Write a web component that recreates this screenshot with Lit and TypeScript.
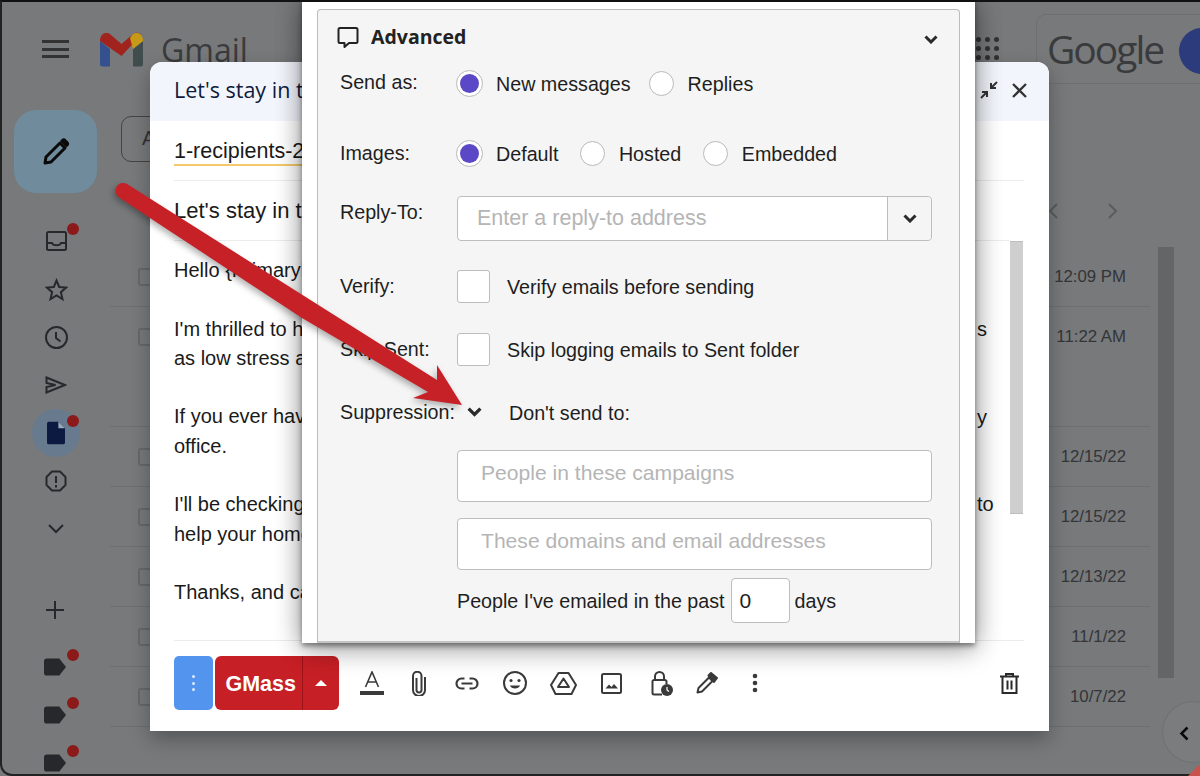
import { LitElement, html, css, svg } from 'lit';
import { customElement } from 'lit/decorators.js';

const ROWS = [
  { h: 60, date: '12:09 PM' },
  { h: 120, date: '11:22 AM' },
  { h: 60, date: '12/15/22' },
  { h: 60, date: '12/15/22' },
  { h: 60, date: '12/13/22' },
  { h: 60, date: '11/1/22' },
  { h: 60, date: '10/7/22' },
];

const icon = (w: number, h: number, body: unknown) => html`
  <svg width="${w}" height="${h}" viewBox="0 0 ${w} ${h}" fill="none" stroke="currentColor" stroke-width="2">${body}</svg>
`;

const chevron = (w = 14) => html`
  <svg width="${w}" height="${(w * 9) / 14}" viewBox="0 0 14 9" fill="none" stroke="#2a2a2a" stroke-width="3">
    <path d="M1.5 1.5 7 7l5.5-5.5" />
  </svg>
`;

const NAV = [
  { dot: true, w: 21, h: 20, body: svg`<rect x="1" y="1" width="19" height="18" rx="1.500"/><path d="M1 12h5c1 3 8 3 9 0h5"/>` },
  { dot: false, w: 23, h: 23, body: svg`<path d="m11.500 2.500 2.700 6.500 7 .6-5.300 4.600 1.600 6.900-6-3.700-6 3.700 1.600-6.900L1.800 9.600l7-.6z"/>` },
  { dot: false, w: 23, h: 23, body: svg`<circle cx="11.500" cy="11.500" r="10.500"/><path d="M11 6v6l4.500 3.500"/>` },
  { dot: false, w: 22, h: 18, body: svg`<path d="M1.500 1.500 20 9 1.500 16.500v-5.500l9-2-9-2z"/>` },
];

@customElement('app-root')
export class AppRoot extends LitElement {
  static styles = css`
    :host {
      display: block;
      position: relative;
      width: 1200px;
      height: 776px;
      overflow: hidden;
      background: #77797b;
      font-family: 'Liberation Sans', Arial, sans-serif;
      color: #1c1c1c;
    }

    /* dimmed gmail behind the compose window */
    .gmail {
      display: grid;
      grid-template-columns: 110px 1fr;
      grid-template-rows: 100px 1fr;
      height: 776px;
    }
    .topbar {
      grid-column: 1 / 3;
      display: flex;
      align-items: flex-start;
      color: #333;
    }
    .burger {
      margin: 40px 0 0 42px;
      width: 27px;
      height: 18px;
      box-sizing: border-box;
      border-top: 3px solid #333;
      border-bottom: 3px solid #333;
    }
    .burger::after {
      content: '';
      display: block;
      margin-top: 4.500px;
      height: 3px;
      background: #333;
    }
    .logo {
      margin: 32px 0 0 30px;
    }
    .brand {
      margin: 30px 0 0 17px;
      flex: 1;
      font: 32px/40px 'Open Sans', 'Liberation Sans', sans-serif;
      color: #3a3b3d;
    }
    .apps {
      margin: 37px 37px 0 0;
      display: grid;
      grid-template-columns: repeat(3, 5px);
      gap: 4px;
    }
    .apps i {
      width: 5px;
      height: 5px;
      border-radius: 50%;
      background: #333;
    }
    .account {
      position: relative;
      margin: 14px -16px 0 0;
      width: 180px;
      height: 70px;
      box-sizing: border-box;
      border: 1px solid #6d6f71;
      border-radius: 10px;
      padding: 12px 0 0 10px;
      font: 39px/44px 'Open Sans', 'Liberation Sans', sans-serif;
      letter-spacing: -2px;
      color: #3a3b3d;
    }
    .avatar {
      position: absolute;
      left: 142px;
      top: 13px;
      width: 46px;
      height: 46px;
      border-radius: 50%;
      background: #2b3b7c;
    }

    .side {
      display: flex;
      flex-direction: column;
      padding-top: 10px;
      color: #26282b;
    }
    .compose-fab {
      margin-left: 14px;
      width: 83px;
      height: 83px;
      flex: none;
      border-radius: 22px;
      background: #6f8b9c;
      display: flex;
      align-items: center;
      justify-content: center;
      color: #0a0a0a;
    }
    .nav {
      margin: 24px 0 0 33px;
      width: 46px;
    }
    .nav-item {
      position: relative;
      width: 46px;
      height: 48px;
      display: flex;
      align-items: center;
      justify-content: center;
    }
    .nav-item svg {
      position: relative;
    }
    .nav-item.active::before {
      content: '';
      position: absolute;
      left: -1px;
      top: 0;
      width: 48px;
      height: 48px;
      border-radius: 50%;
      background: #687a8e;
    }
    .dot {
      position: absolute;
      left: 34px;
      top: 6px;
      width: 12px;
      height: 12px;
      border-radius: 50%;
      background: #8c1a1a;
    }
    .plus {
      margin: 48px 0 0 46px;
      flex: none;
    }
    .labels {
      margin: 29px 0 0 33px;
    }
    .label {
      position: relative;
      width: 46px;
      height: 48px;
      box-sizing: border-box;
      padding: 10px 0 0 11px;
    }
    .label .dot {
      top: 1px;
    }

    .main {
      display: flex;
      flex-direction: column;
      align-items: flex-start;
      min-width: 0;
    }
    .filter {
      margin: 16px 0 0 11px;
      width: 60px;
      height: 46px;
      box-sizing: border-box;
      border: 1px solid #444;
      border-radius: 10px;
      padding: 10px 0 0 20px;
      font-size: 20px;
      color: #333;
    }
    .pager {
      margin: 41px 0 0 938px;
      width: 70px;
      display: flex;
      justify-content: space-between;
      color: #5a5c5e;
    }
    .mail-area {
      margin-top: 28px;
      display: flex;
      gap: 8px;
      align-items: flex-start;
    }
    .rows {
      width: 1040px;
    }
    .row {
      position: relative;
      border-bottom: 1px solid #6c6e70;
      box-sizing: border-box;
      display: flex;
      justify-content: flex-end;
      padding: 18px 24px 0 0;
      font-size: 16.800px;
      line-height: 24px;
      color: #333537;
    }
    .row::before {
      content: '';
      position: absolute;
      left: 28px;
      top: 21px;
      width: 18px;
      height: 18px;
      box-sizing: border-box;
      border: 2px solid #66686a;
      border-radius: 3px;
    }
    .thumb {
      width: 16px;
      height: 431px;
      background: #646566;
    }
    .collapse {
      position: absolute;
      left: 1163px;
      top: 702px;
      width: 60px;
      height: 60px;
      border-radius: 50%;
      background: #7a7c7e;
      box-shadow: 0 0 2px rgba(0, 0, 0, 0.2);
      color: #0a0a0a;
      box-sizing: border-box;
      padding: 24px 0 0 16px;
    }

    /* compose window */
    .compose {
      position: absolute;
      left: 150px;
      top: 62px;
      width: 899px;
      height: 669px;
      background: #fff;
      border-radius: 12px 12px 0 0;
      box-shadow: 0 8px 20px rgba(0, 0, 0, 0.3);
      display: flex;
      flex-direction: column;
    }
    .c-head {
      height: 59px;
      flex: none;
      box-sizing: border-box;
      background: #f2f6fc;
      border-radius: 12px 12px 0 0;
      display: flex;
      align-items: center;
      justify-content: space-between;
      padding: 0 22px 3px 24px;
      font: 500 21.500px/28px 'Open Sans', 'Liberation Sans', sans-serif;
      color: #0f1a3c;
    }
    .tools {
      display: flex;
      gap: 14px;
      align-items: center;
      color: #333;
    }
    .c-body {
      flex: 1;
      padding: 0 25px 0 24px;
      display: flex;
      flex-direction: column;
      font-size: 20px;
      line-height: 29.300px;
      color: #1a1a1a;
    }
    .c-name {
      width: 400px;
      height: 45px;
      box-sizing: border-box;
      padding-top: 16px;
      font-size: 21.500px;
      border-bottom: 2px solid #f3c969;
      line-height: 29px;
    }
    .c-rule {
      height: 14px;
      border-bottom: 1px solid #ececec;
      flex: none;
    }
    .c-subject {
      height: 60px;
      margin-right: 14px;
      box-sizing: border-box;
      padding-top: 15px;
      border-bottom: 1px solid #ececec;
      font-size: 22px;
      line-height: 30px;
      flex: none;
    }
    .c-text {
      position: relative;
      flex: 1;
      padding-top: 15px;
    }
    .c-text p {
      margin: 0 0 29.300px;
    }
    .tail {
      position: absolute;
      left: 803px;
    }
    .tail-s {
      top: 73.600px;
    }
    .tail-y {
      top: 161.500px;
    }
    .tail-to {
      top: 249.400px;
    }
    .c-scroll {
      position: absolute;
      left: 860px;
      top: 179px;
      width: 13px;
      height: 273px;
      background: #cfcfcf;
      border-top: 1px solid #bdbdbd;
      border-bottom: 1px solid #bdbdbd;
      box-sizing: border-box;
    }
    .c-foot {
      height: 91px;
      flex: none;
      border-top: 1px solid #ececec;
      margin: 0 25px 0 24px;
      display: flex;
      align-items: flex-start;
      padding-top: 15px;
      box-sizing: border-box;
      color: #3a3a3a;
    }
    .more {
      width: 39px;
      height: 54px;
      border-radius: 5px;
      background: #5294ee;
      display: flex;
      flex-direction: column;
      align-items: center;
      justify-content: center;
      gap: 3.500px;
    }
    .more i {
      width: 3px;
      height: 3px;
      border-radius: 50%;
      background: #dceaff;
    }
    .gmass {
      margin-left: 2px;
      width: 124px;
      height: 54px;
      border-radius: 6px;
      background: #c62026;
      display: flex;
      color: #fff;
      font-weight: 700;
      font-size: 21.500px;
    }
    .gmass b {
      width: 88px;
      text-align: right;
      line-height: 56px;
      box-sizing: border-box;
      border-right: 1px solid #9d1318;
      padding-right: 6px;
    }
    .caret {
      flex: 1;
      display: flex;
      align-items: center;
      justify-content: center;
    }
    .caret::before {
      content: '';
      border: 6px solid transparent;
      border-top: 0;
      border-bottom: 6px solid #fff;
    }
    .tool-row {
      display: flex;
      align-items: center;
      height: 54px;
      margin-left: 8px;
      flex: 1;
    }
    .tool {
      width: 48px;
      display: flex;
      align-items: center;
      justify-content: center;
    }
    .tool-a svg {
      margin-left: 2px;
    }
    .tool-lock svg {
      margin-left: 6px;
    }
    .trash {
      margin-left: auto;
      margin-right: -9px;
      color: #2a2a2a;
    }

    /* advanced settings modal */
    .modal {
      position: absolute;
      left: 302px;
      top: 0;
      width: 673px;
      height: 643px;
      background: #fff;
      box-shadow: 0 3px 5px rgba(0, 0, 0, 0.4), 0 8px 26px rgba(0, 0, 0, 0.22), 0 0 24px rgba(0, 0, 0, 0.3);
      padding: 9px 15px 0;
      box-sizing: border-box;
    }
    .panel {
      height: 100%;
      background: #f5f5f5;
      border: 1px solid #bcbcbc;
      border-bottom: 2px solid #c4c4c4;
      border-radius: 4px 4px 0 0;
      box-sizing: border-box;
      padding: 0 22px;
      font-size: 19.700px;
      color: #1e1e1e;
    }
    .p-head {
      height: 54px;
      display: flex;
      align-items: center;
      justify-content: space-between;
      font: 700 19.500px/24px 'Open Sans', 'Liberation Sans', sans-serif;
      color: #222;
    }
    .p-title {
      display: flex;
      align-items: center;
      gap: 12px;
      margin-left: -3px;
    }
    .p-chevron {
      margin-right: -1px;
    }
    .field {
      display: grid;
      grid-template-columns: 117px 1fr;
      align-items: center;
    }
    .opts {
      display: flex;
      align-items: center;
    }
    .send {
      height: 36px;
    }
    .send .opts {
      padding-top: 5px;
    }
    .images {
      height: 36px;
      margin-top: 35px;
    }
    .images .opts {
      padding-top: 3px;
    }
    .reply-field {
      height: 45px;
      margin-top: 25px;
    }
    .reply-label {
      margin-top: -13px;
    }
    .verify {
      height: 33px;
      margin-top: 29px;
    }
    .skip {
      height: 33px;
      margin-top: 30px;
    }
    .check-text {
      padding-top: 2px;
    }
    .suppress {
      height: 30px;
      margin-top: 31px;
    }
    .suppress-chevron {
      margin: 0 27px 0 10px;
      display: flex;
    }
    .suppress-text {
      padding-top: 2px;
    }
    .radio {
      width: 25px;
      height: 25px;
      flex: none;
      box-sizing: border-box;
      border: 1px solid #b9b9b9;
      border-radius: 50%;
      background: #fff;
      margin: -3px 14px 0 0;
    }
    .radio.on {
      width: 27px;
      height: 27px;
      margin: -3px 13px 0 -1px;
      padding: 3px;
    }
    .radio.on::after {
      content: '';
      display: block;
      height: 100%;
      border-radius: 50%;
      background: #5b48c6;
    }
    .opt {
      display: flex;
      align-items: center;
      margin-right: 21.500px;
    }
    .send .opt {
      margin-right: 18px;
    }
    .box {
      width: 33px;
      height: 33px;
      flex: none;
      box-sizing: border-box;
      border: 1px solid #bdbdbd;
      border-radius: 3px;
      background: #fff;
      margin-right: 17px;
    }
    .input {
      box-sizing: border-box;
      border: 1px solid #bdbdbd;
      border-radius: 4px;
      background: #fff;
      color: #b5b5b5;
      font-size: 21.500px;
      display: flex;
      align-items: center;
    }
    .reply {
      height: 45px;
      width: 475px;
      padding-left: 19px;
      justify-content: space-between;
    }
    .reply-btn {
      width: 43px;
      height: 100%;
      background: #f5f5f5;
      border-left: 1px solid #bdbdbd;
      border-radius: 0 4px 4px 0;
      display: flex;
      align-items: center;
      justify-content: center;
    }
    .wide {
      margin: 16px 0 0 117px;
      height: 52px;
      width: 475px;
      padding: 0 0 6px 23px;
      font-size: 21.100px;
    }
    .wide.first {
      margin-top: 23px;
    }
    .past {
      margin: 10px 0 0 117px;
      display: flex;
      align-items: center;
      gap: 5px;
    }
    .days {
      width: 59px;
      height: 45px;
      margin: -2px 0 0 1px;
      box-sizing: border-box;
      border: 1px solid #bdbdbd;
      border-radius: 4px;
      background: #fff;
      padding-left: 8px;
      line-height: 43px;
      font-size: 21px;
    }

    .arrow {
      position: absolute;
      left: 0;
      top: 0;
      filter: drop-shadow(-2px 3px 3px rgba(0, 0, 0, 0.3));
    }
    .frame {
      position: absolute;
      inset: 0;
      border-top: 2px solid #111;
      border-left: 2px solid #222;
      border-bottom: 2px solid #222;
      border-bottom-left-radius: 12px;
      pointer-events: none;
    }
    .corner {
      position: absolute;
      right: 0;
      bottom: 0;
      width: 0;
      height: 0;
      border-left: 12px solid transparent;
      border-bottom: 12px solid #c9534a;
    }
  `;

  private gmail() {
    return html`
      <div class="gmail">
        <div class="topbar">
          <div class="burger"></div>
          <svg class="logo" width="45" height="35" viewBox="0 0 45 35" fill="none">
            <path d="M1 9v23a2.500 2.500 0 0 0 2.500 2.500H11V17z" fill="#34508f" />
            <path d="M44 9v23a2.500 2.500 0 0 1-2.500 2.500H34V17z" fill="#414c4c" />
            <path d="M1 9c0-8 7-10 11-6l10.500 9L33 3c4-4 8-2 9 0L22.500 24 1 9z" fill="#a0231e" />
            <path d="M33 3c4-4 11-2 11 6l-10 8-3-11z" fill="#c69a16" />
          </svg>
          <div class="brand">Gmail</div>
          <div class="apps">${Array.from({ length: 9 }, () => html`<i></i>`)}</div>
          <div class="account">Google<span class="avatar"></span></div>
        </div>

        <div class="side">
          <div class="compose-fab">
            <svg width="28" height="28" viewBox="0 0 28 28" fill="none" stroke="currentColor" stroke-width="3">
              <path d="M3 25l1-6L18 5l5 5L9 24z" stroke-linejoin="round" />
              <path d="M19 4l1.500-1.500a1.800 1.800 0 0 1 2.500 0l2 2a1.800 1.800 0 0 1 0 2.500L23.500 8.500" fill="currentColor" />
            </svg>
          </div>
          <div class="nav">
            ${NAV.map(
              (n) => html`<div class="nav-item">${icon(n.w, n.h, n.body)}${n.dot ? html`<span class="dot"></span>` : ''}</div>`,
            )}
            <div class="nav-item active">
              <svg width="18" height="24" viewBox="0 0 19 24">
                <path d="M2 0h10l7 7v15a2 2 0 0 1-2 2H2a2 2 0 0 1-2-2V2a2 2 0 0 1 2-2z" fill="#0c1a42" />
                <path d="M12 0l7 7h-7z" fill="#9aa7b9" />
              </svg>
              <span class="dot"></span>
            </div>
            <div class="nav-item">
              ${icon(22, 22, svg`<path d="M7 1.500h8l5.500 5.500v8L15 20.500H7L1.500 15V7z" stroke-linejoin="round"/><path d="M11 6v7M11 15v2.500"/>`)}
            </div>
            <div class="nav-item">${icon(16, 10, svg`<path d="M1 1l7 7 7-7"/>`)}</div>
          </div>
          <svg class="plus" width="18" height="18" viewBox="0 0 18 18" stroke="currentColor" stroke-width="2">
            <path d="M9 0v18M0 9h18" />
          </svg>
          <div class="labels">
            ${[0, 1, 2].map(
              () => html`<div class="label">
                <svg width="22" height="18" viewBox="0 0 23 18">
                  <path d="M3 0h13l7 9-7 9H3a3 3 0 0 1-3-3V3a3 3 0 0 1 3-3z" fill="currentColor" />
                </svg>
                <span class="dot"></span>
              </div>`,
            )}
          </div>
        </div>

        <div class="main">
          <div class="filter">A</div>
          <div class="pager">
            ${icon(10, 16, svg`<path d="M9 1 2 8l7 7"/>`)} ${icon(10, 16, svg`<path d="M1 1l7 7-7 7"/>`)}
          </div>
          <div class="mail-area">
            <div class="rows">
              ${ROWS.map((r) => html`<div class="row" style="height:${r.h}px">${r.date}</div>`)}
            </div>
            <div class="thumb"></div>
          </div>
        </div>
      </div>
      <div class="collapse">
        <svg width="10" height="15" viewBox="0 0 10 15" fill="none" stroke="currentColor" stroke-width="2.500">
          <path d="M8.500 1.500 2.500 7.500l6 6" />
        </svg>
      </div>
    `;
  }

  private composeWindow() {
    return html`
      <div class="compose">
        <div class="c-head">
          <span>Let's stay in t</span>
          <span class="tools">
            <svg width="18" height="18" viewBox="0 0 18 18" fill="none" stroke="currentColor" stroke-width="2">
              <path d="M17 1l-6 6M11 2v5h5M1 17l6-6M2 11h5v5" />
            </svg>
            <svg width="15" height="15" viewBox="0 0 15 15" fill="none" stroke="currentColor" stroke-width="2.300">
              <path d="M1 1l13 13M14 1 1 14" />
            </svg>
          </span>
        </div>
        <div class="c-body">
          <div class="c-name">1-recipients-2</div>
          <div class="c-rule"></div>
          <div class="c-subject">Let's stay in t</div>
          <div class="c-text">
            <p>Hello {Primaryl</p>
            <p>I'm thrilled to h<br />as low stress a</p>
            <p>If you ever hav<br />office.</p>
            <p>I'll be checking<br />help your home</p>
            <p>Thanks, and ca</p>
            <span class="tail tail-s">s</span>
            <span class="tail tail-y">y</span>
            <span class="tail tail-to">to</span>
          </div>
        </div>
        <div class="c-scroll"></div>
        <div class="c-foot">
          <div class="more"><i></i><i></i><i></i></div>
          <div class="gmass"><b>GMass</b><span class="caret"></span></div>
          <div class="tool-row">
            <span class="tool tool-a">
              <svg width="24" height="24" viewBox="0 0 24 24" fill="none" stroke="currentColor" stroke-width="1.600">
                <path d="M5.500 16 12 1l6.500 15M7.800 11h8.400" />
                <path d="M0 22h24" stroke-width="4" />
              </svg>
            </span>
            <span class="tool">
              <svg width="14" height="25" viewBox="0 0 14 25" fill="none" stroke="currentColor" stroke-width="2">
                <path d="M4.500 7v12a2.500 2.500 0 0 0 5 0V5A4 4 0 0 0 1 5v14a6 6 0 0 0 12 0V6" />
              </svg>
            </span>
            <span class="tool">
              <svg width="24" height="13" viewBox="0 0 24 13" fill="none" stroke="currentColor" stroke-width="2.200">
                <path d="M9.500 1.500H6.500a5 5 0 0 0 0 10h3M14.500 1.500h3a5 5 0 0 1 0 10h-3M6.500 6.500h11" />
              </svg>
            </span>
            <span class="tool">
              <svg width="24" height="24" viewBox="0 0 24 24" fill="none" stroke="currentColor" stroke-width="2">
                <circle cx="12" cy="12" r="11" />
                <circle cx="8" cy="9.500" r="1.600" fill="currentColor" stroke="none" />
                <circle cx="16" cy="9.500" r="1.600" fill="currentColor" stroke="none" />
                <path d="M7 14.500h10c-1 4-9 4-10 0z" fill="currentColor" stroke="none" />
              </svg>
            </span>
            <span class="tool">
              <svg width="27" height="23" viewBox="0 0 27 23" fill="none" stroke="currentColor" stroke-width="2" stroke-linejoin="round">
                <path d="M8.500 1h10L26 13l-4.500 9h-16L1 13z" />
                <path d="M13.500 6.500l5.500 8.500H8z" />
              </svg>
            </span>
            <span class="tool">
              <svg width="21" height="21" viewBox="0 0 21 21" fill="none" stroke="currentColor" stroke-width="2">
                <rect x="1" y="1" width="19" height="19" rx="1.500" />
                <path d="M4.500 15.500l3.500-4 2.500 2.500 2.500-3 4 4.500z" fill="currentColor" stroke="none" />
              </svg>
            </span>
            <span class="tool tool-lock">
              <svg width="22" height="26" viewBox="0 0 22 26" fill="none" stroke="currentColor" stroke-width="2">
                <path d="M11 24.500H3a1.500 1.500 0 0 1-1.500-1.500V11.500A1.500 1.500 0 0 1 3 10h11a1.500 1.500 0 0 1 1.500 1.500V14" />
                <path d="M4 10V6.500a4.500 4.500 0 0 1 9 0V10" />
                <circle cx="16" cy="20" r="6" fill="currentColor" stroke="none" />
                <path d="M16 17v3l2 1.500" stroke="#fff" stroke-width="1.200" />
              </svg>
            </span>
            <span class="tool">
              <svg width="22" height="22" viewBox="0 0 22 22" fill="none" stroke="currentColor" stroke-width="2" stroke-linejoin="round">
                <path d="M1.500 20.500l1-4.500L13 5.500l3.500 3.500L6 19.500z" />
                <path d="M12.500 3.500 15 1l6 5-3 4z" fill="currentColor" />
              </svg>
            </span>
            <span class="tool">
              <svg width="6" height="20" viewBox="0 0 6 20" fill="currentColor">
                <circle cx="3" cy="3" r="2.300" /><circle cx="3" cy="10" r="2.300" /><circle cx="3" cy="17" r="2.300" />
              </svg>
            </span>
            <span class="tool trash">
              <svg width="19" height="21" viewBox="0 0 19 21" fill="none" stroke="currentColor" stroke-width="2">
                <path d="M0 3.500h19M6 3V1h7v2M2.500 4v16h14V4M7.500 7.500v9M11.500 7.500v9" />
              </svg>
            </span>
          </div>
        </div>
      </div>
    `;
  }

  private modal() {
    return html`
      <div class="modal">
        <div class="panel">
          <div class="p-head">
            <span class="p-title">
              <svg width="22" height="22" viewBox="0 0 22 22" fill="none" stroke="#222" stroke-width="2">
                <path d="M3 2h16a1.500 1.500 0 0 1 1.500 1.500v12A1.500 1.500 0 0 1 19 17h-7l-4.500 4v-4H3a1.500 1.500 0 0 1-1.500-1.500v-12A1.500 1.500 0 0 1 3 2z" stroke-linejoin="round" />
              </svg>
              Advanced
            </span>
            <span class="p-chevron">${chevron()}</span>
          </div>
          <div class="field send">
            <span>Send as:</span>
            <div class="opts">
              <div class="opt"><span class="radio on"></span>New messages</div>
              <div class="opt"><span class="radio"></span>Replies</div>
            </div>
          </div>
          <div class="field images">
            <span>Images:</span>
            <div class="opts">
              <div class="opt"><span class="radio on"></span>Default</div>
              <div class="opt"><span class="radio"></span>Hosted</div>
              <div class="opt"><span class="radio"></span>Embedded</div>
            </div>
          </div>
          <div class="field reply-field">
            <span class="reply-label">Reply-To:</span>
            <div class="input reply">
              <span>Enter a reply-to address</span>
              <span class="reply-btn">${chevron()}</span>
            </div>
          </div>
          <div class="field verify">
            <span>Verify:</span>
            <div class="opts"><span class="box"></span><span class="check-text">Verify emails before sending</span></div>
          </div>
          <div class="field skip">
            <span>Skip Sent:</span>
            <div class="opts"><span class="box"></span><span class="check-text">Skip logging emails to Sent folder</span></div>
          </div>
          <div class="field suppress">
            <span>Suppression:</span>
            <div class="opts"><span class="suppress-chevron">${chevron(15)}</span><span class="suppress-text">Don't send to:</span></div>
          </div>
          <div class="input wide first">People in these campaigns</div>
          <div class="input wide">These domains and email addresses</div>
          <div class="past">
            People I've emailed in the past
            <span class="days">0</span>
            days
          </div>
        </div>
      </div>
    `;
  }

  render() {
    return html`
      ${this.gmail()} ${this.composeWindow()} ${this.modal()}
      <svg class="arrow" width="1200" height="776" viewBox="0 0 1200 776">
        <path d="M117 186a7.500 7.500 0 0 1 10-2L437 380V365L462 405 413 398 428 392 302 318 153 220 120 198a8 8 0 0 1-3-12z" fill="#c52127" />
      </svg>
      <div class="frame"></div>
      <div class="corner"></div>
    `;
  }
}
